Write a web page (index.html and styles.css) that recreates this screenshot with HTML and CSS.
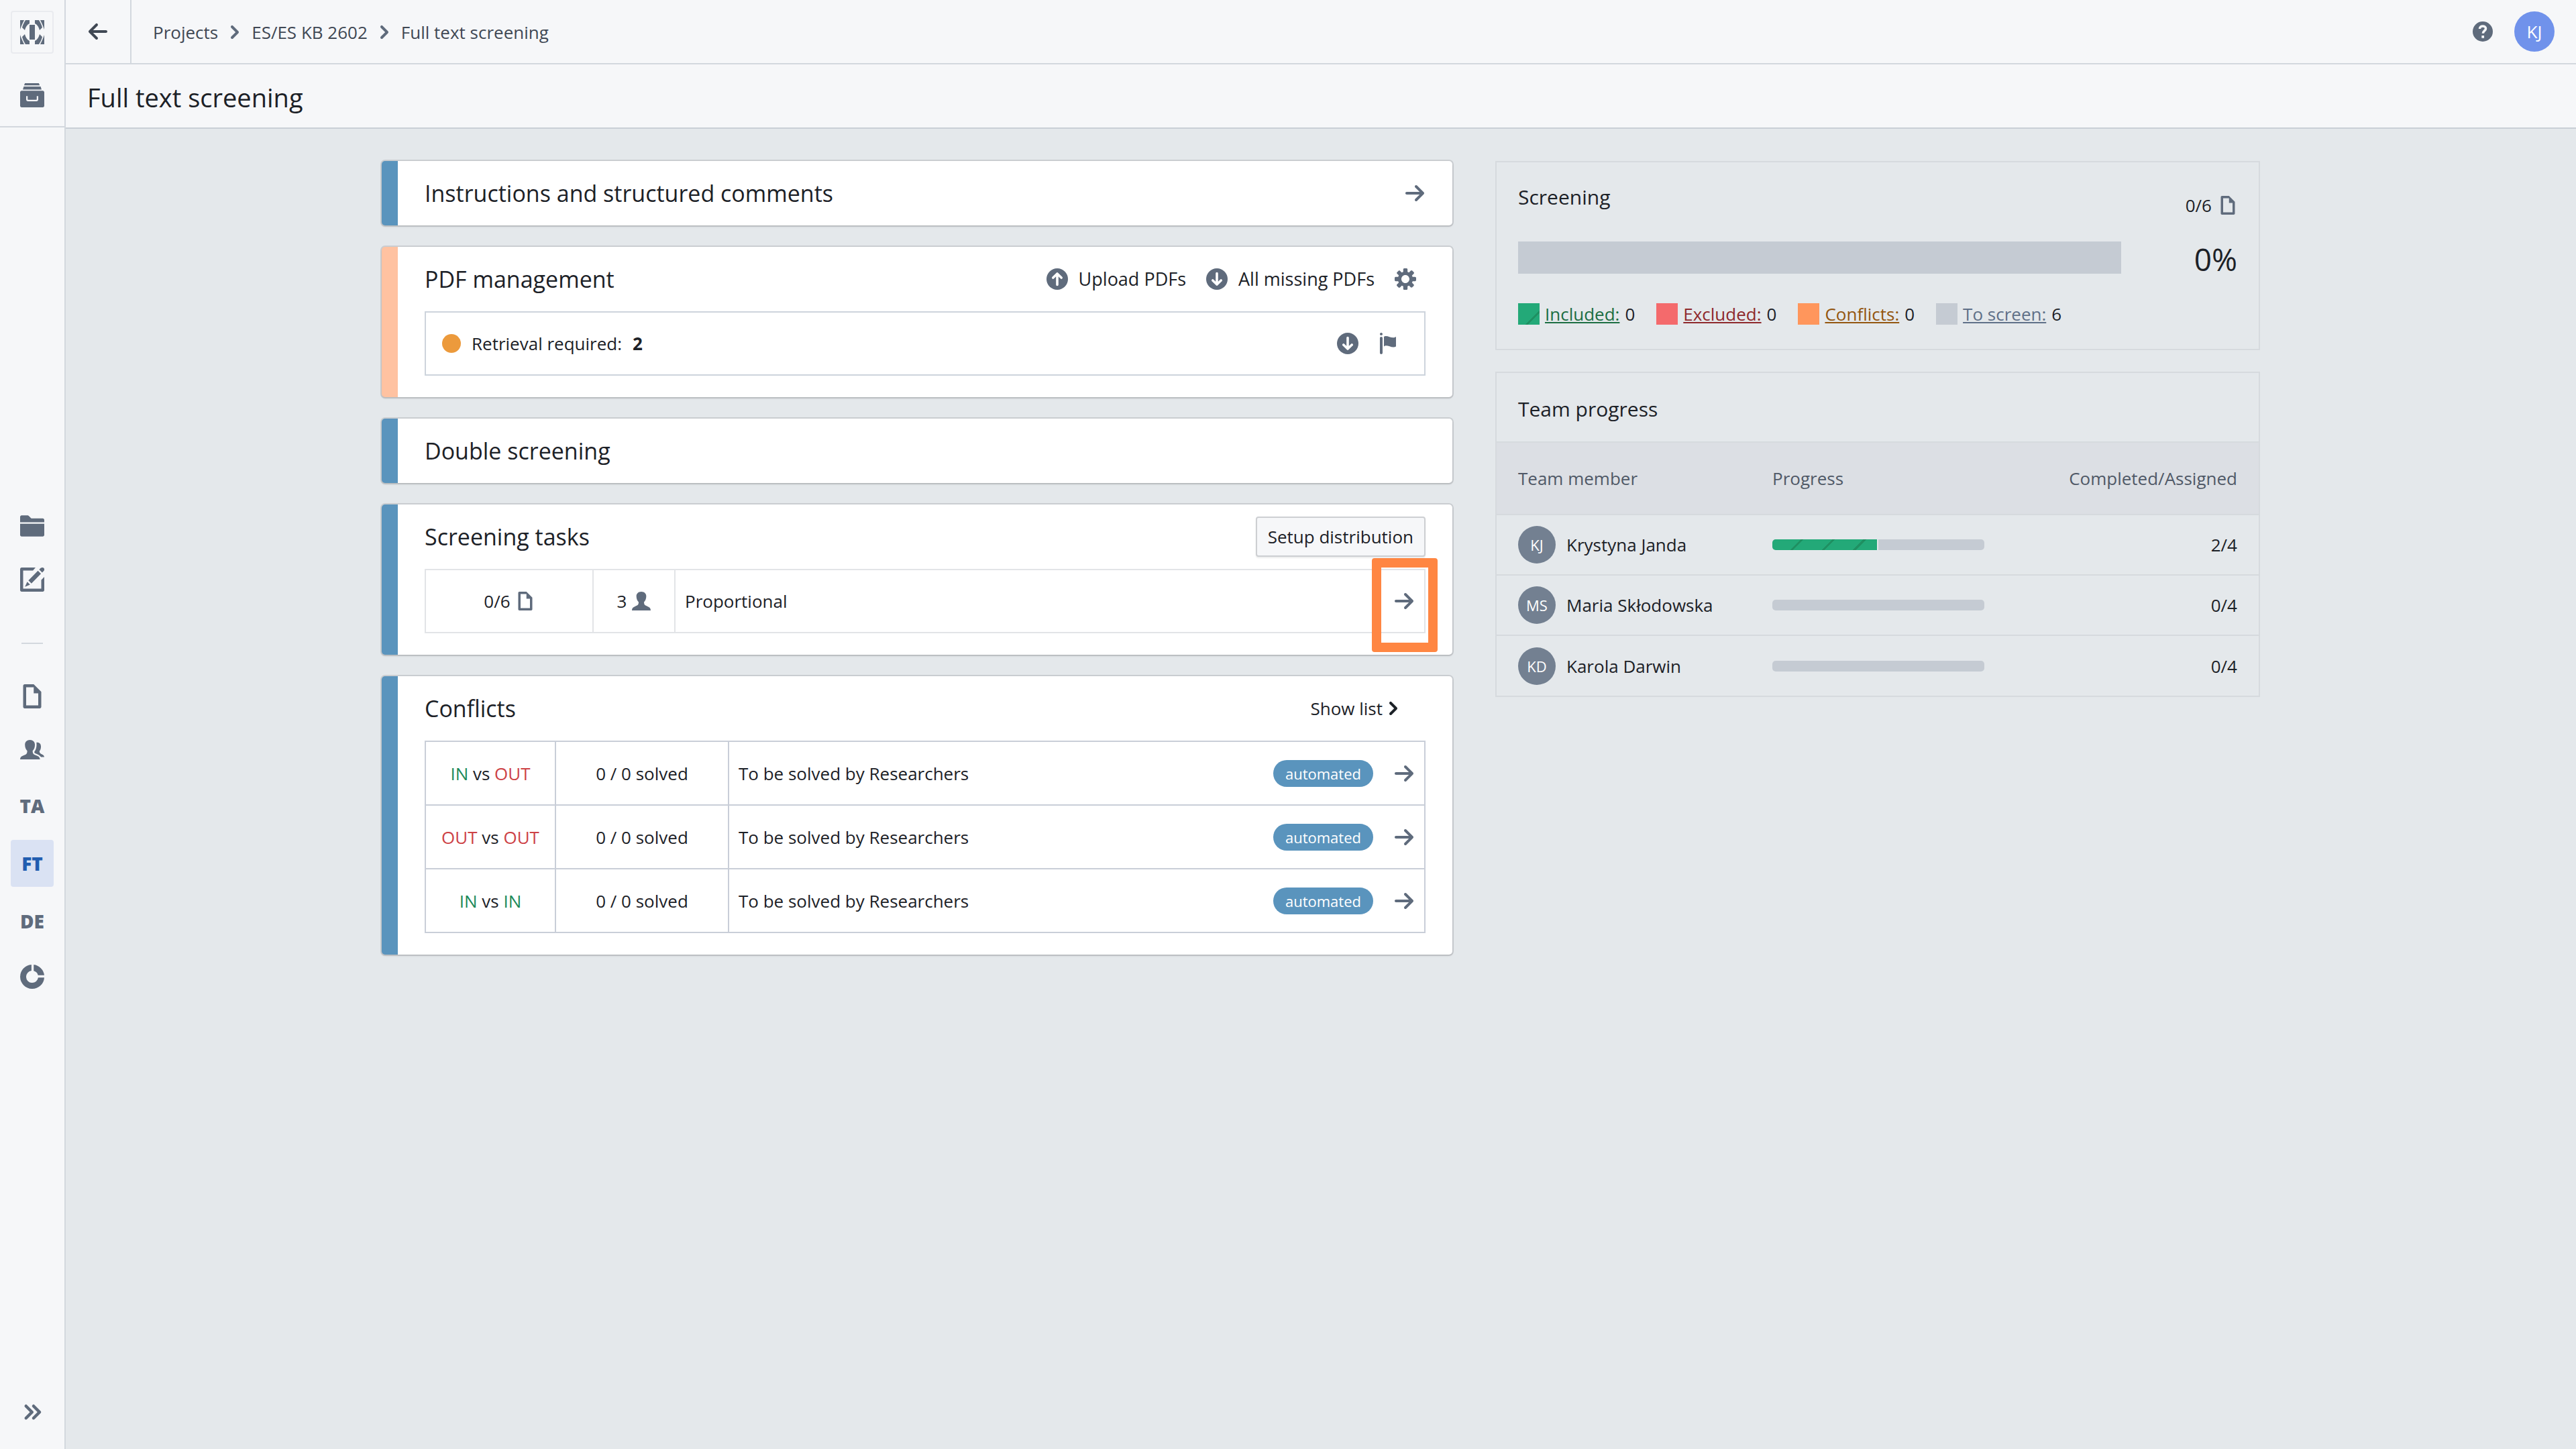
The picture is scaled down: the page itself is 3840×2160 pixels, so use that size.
FILE: index.html
```html
<!DOCTYPE html>
<html lang="en">
<head>
<meta charset="utf-8">
<title>Full text screening</title>
<link rel="stylesheet" href="styles.css">
</head>
<body>
<svg class="sprite" aria-hidden="true">
  <symbol id="logo" viewBox="0 0 36 36"><path d="M14 7h8v22h-8zM0 0h6C4 4 2 8 0 14zM8 0h6v5C10 7 8 11 7 15L3 11C4 7 6 3 8 0zM36 0h-6c2 4 4 8 6 14zM28 0h-6v5c4 2 6 6 7 10l4-4c-1-4-3-8-5-11zM0 36h6c-2-4-4-8-6-14zM8 36h6v-5c-4-2-6-6-7-10l-4 4c1 4 3 8 5 11zM36 36h-6c2-4 4-8 6-14zM28 36h-6v-5c4-2 6-6 7-10l4 4c-1 4-3 8-5 11z"/></symbol>
  <symbol id="archive" viewBox="0 0 16 16"><path d="M3.2 0h9.2l.6 1.4H2.600zM2.400 2.200h11.200l.6 2H1.800zM1 5h14c.55 0 1 .45 1 1v9c0 .55-.45 1-1 1H1c-.55 0-1-.45-1-1V6c0-.55.45-1 1-1zm3 3.500v2.300c0 .7.500 1.200 1.200 1.200h5.600c.7 0 1.200-.5 1.200-1.200V8.500h-1v2.200c0 .2-.1.300-.3.300H5.300c-.2 0-.3-.1-.3-.3V8.500z"/></symbol>
  <symbol id="folder" viewBox="0 0 16 16"><path d="M0 14c0 .55.45 1 1 1h14c.55 0 1-.45 1-1V6.500H0zm15-11H7.400L5.700 1.300A1 1 0 0 0 5 1H1c-.55 0-1 .45-1 1v3.500h16V4c0-.55-.45-1-1-1z"/></symbol>
  <symbol id="edit" viewBox="0 0 16 16"><path d="M10.200 0L8.500 2H2v12h12V8.200l2-2V15c0 .55-.45 1-1 1H1c-.55 0-1-.45-1-1V1c0-.55.45-1 1-1zM14.700 0a1.300 1.300 0 0 1 .9 2.300l-1 1-2-2 1-1c.300-.2.700-.3 1.100-.3zM11.800 2.100l2 2-6.300 6.400-2-2zM4.700 9.400l1.900 1.900L3.200 12.800z"/></symbol>
  <symbol id="document" viewBox="0 0 16 16"><path d="M9 0H3c-.55 0-1 .45-1 1v14c0 .55.45 1 1 1h10c.55 0 1-.45 1-1V5L9 0zm3 14H4V2h5v4h3v8z"/></symbol>
  <symbol id="people" viewBox="0 0 16 16"><path d="M6.500 1.300c2 0 3.300 1.300 3.300 3.200 0 1.600-.6 3.200-1.500 4 0 2 .6 2.400 2.300 3 1.500.5 2.400 1.100 2.600 2.700H0c.1-1.600 1-2.200 2.400-2.700 1.700-.6 2.300-1 2.300-3-.9-.8-1.500-2.400-1.500-4 0-1.900 1.300-3.200 3.300-3.200zM10.800 3c2-.2 3 .9 3 2.800 0 1.300-.4 2.300-1 3 0 1.300.7 1.600 1.700 2.100.9.400 1.400.9 1.500 1.800h-2.200c-.7-1.200-1.700-1.600-3.800-2.500-.4-.2-.6-.4-.6-1 1-1 1.500-3 1.500-4.600 0-.6 0-1.100-.1-1.600z"/></symbol>
  <symbol id="person" viewBox="0 0 16 16"><path d="M8 0c2.500 0 4.200 1.600 4.200 3.900 0 1.900-.7 3.900-1.900 5 0 2.300.8 2.800 3 3.600 1.600.6 2.600 1.400 2.700 3.500H0c.1-2.100 1.100-2.900 2.700-3.500 2.200-.8 3-1.300 3-3.600-1.200-1.100-1.900-3.100-1.900-5C3.800 1.600 5.500 0 8 0z"/></symbol>
  <symbol id="donut" viewBox="0 0 16 16"><path d="M7.500 0v4.050A4 4 0 1 0 11.950 8.500H16A8 8 0 1 1 7.500 0zM9 0a8 8 0 0 1 7 7h-4.150A4 4 0 0 0 9 4.150z"/></symbol>
  <symbol id="double-chevron" viewBox="0 0 16 16"><path d="M7.710 7.290l-4-4a1.003 1.003 0 0 0-1.420 1.420L5.590 8 2.300 11.290c-.19.180-.3.430-.3.710a1.003 1.003 0 0 0 1.710.710l4-4C7.890 8.530 8 8.280 8 8c0-.28-.11-.53-.29-.71zm5 0l-4-4a1.003 1.003 0 0 0-1.420 1.420L10.590 8 7.300 11.290c-.19.180-.3.430-.3.710a1.003 1.003 0 0 0 1.710.710l4-4c.18-.18.290-.43.290-.71 0-.28-.11-.53-.29-.71z"/></symbol>
  <symbol id="chevron" viewBox="0 0 16 16"><path d="M10.710 7.290l-4-4a1.003 1.003 0 0 0-1.420 1.420L8.590 8 5.300 11.290c-.19.180-.3.430-.3.710a1.003 1.003 0 0 0 1.710.710l4-4c.18-.18.290-.43.290-.71 0-.28-.11-.53-.29-.71z"/></symbol>
  <symbol id="arrow-left" viewBox="0 0 16 16"><path d="M13.990 6.990H4.410L7.700 3.700a1.003 1.003 0 0 0-1.420-1.420l-5 5a1.014 1.014 0 0 0 0 1.420l5 5a1.003 1.003 0 0 0 1.420-1.420L4.410 8.990H14c.55 0 1-.45 1-1s-.46-1-1.010-1z"/></symbol>
  <symbol id="arrow-right" viewBox="0 0 16 16"><path d="M14.700 7.290l-5-5a.965.965 0 0 0-.71-.3 1.003 1.003 0 0 0-.71 1.710l3.300 3.290H1.990c-.55 0-1 .45-1 1s.45 1 1 1h9.590l-3.290 3.290a1.003 1.003 0 0 0 1.420 1.420l5-5c.18-.18.290-.43.290-.71s-.12-.52-.3-.7z"/></symbol>
  <symbol id="circle-up" viewBox="0 0 16 16"><circle cx="8" cy="8" r="8"/><path d="M8 12.200V4.300M4.900 7L8 4l3.100 3" fill="none" stroke="#fff" stroke-width="1.800" stroke-linecap="round" stroke-linejoin="round"/></symbol>
  <symbol id="circle-down" viewBox="0 0 16 16"><circle cx="8" cy="8" r="8"/><path d="M8 3.800v7.900M4.900 9L8 12l3.100-3" fill="none" stroke="#fff" stroke-width="1.800" stroke-linecap="round" stroke-linejoin="round"/></symbol>
  <symbol id="flag" viewBox="0 0 16 16"><path d="M2.990 2.990c-.55 0-1 .45-1 1v11c0 .55.450 1 1 1s1-.45 1-1v-11c0-.55-.45-1-1-1zm0-3c-.55 0-1 .45-1 1s.45 1 1 1 1-.45 1-1-.45-1-1-1zm2 3.030v7.230c2.070-2.110 5.920 1.750 9 0V3.020c-3 2.070-6.940-2.030-9 0z"/></symbol>
  <symbol id="cog" viewBox="0 0 16 16"><path d="M15.190 6.390h-1.850c-.11-.37-.27-.71-.45-1.040l1.360-1.360c.31-.31.310-.82 0-1.130l-1.130-1.130a.803.803 0 0 0-1.130 0l-1.360 1.360c-.33-.17-.67-.33-1.040-.44V.79c0-.44-.36-.8-.8-.8h-1.600c-.44 0-.8.36-.8.8v1.860c-.39.120-.75.280-1.100.470l-1.300-1.300c-.3-.3-.79-.3-1.090 0L1.820 2.910c-.3.300-.3.790 0 1.090l1.300 1.300c-.2.340-.36.700-.48 1.090H.79c-.44 0-.8.360-.8.800v1.600c0 .44.360.8.800.8h1.850c.11.370.27.710.45 1.040l-1.360 1.360c-.31.310-.31.820 0 1.130l1.130 1.130c.31.310.82.310 1.130 0l1.360-1.360c.33.180.67.330 1.040.44v1.860c0 .44.360.8.800.8h1.600c.44 0 .8-.36.800-.8v-1.860c.39-.12.750-.28 1.100-.47l1.300 1.300c.3.300.79.300 1.090 0l1.090-1.090c.3-.3.300-.79 0-1.090l-1.300-1.300c.19-.35.360-.71.480-1.100h1.850c.44 0 .8-.36.800-.8v-1.600a.816.816 0 0 0-.81-.79zm-7.200 4.600c-1.660 0-3-1.340-3-3s1.340-3 3-3 3 1.340 3 3-1.340 3-3 3z"/></symbol>
  <symbol id="help" viewBox="0 0 16 16"><circle cx="8" cy="8" r="8"/><path d="M5.600 5.800C5.600 3 10.400 3 10.400 5.700c0 1.700-2.200 1.800-2.200 3.800" fill="none" stroke="#f6f7f9" stroke-width="1.900"/><path d="M7.100 11.200h2v2h-2z" fill="#f6f7f9"/></symbol>
</svg>

<div class="app">
  <aside class="sidebar">
    <div class="sidebar-top">
      <a class="logo" href="#" aria-label="Home"><svg class="icon-lg"><use href="#logo"/></svg></a>
      <a class="side-link" href="#" aria-label="Projects"><svg class="icon-lg"><use href="#archive"/></svg></a>
    </div>
    <nav class="side-nav" aria-label="Project">
      <a class="side-link" href="#" aria-label="Files"><svg class="icon-lg"><use href="#folder"/></svg></a>
      <a class="side-link" href="#" aria-label="Edit"><svg class="icon-lg"><use href="#edit"/></svg></a>
      <hr class="side-divider">
      <a class="side-link" href="#" aria-label="Documents"><svg class="icon-lg"><use href="#document"/></svg></a>
      <a class="side-link" href="#" aria-label="Team"><svg class="icon-lg"><use href="#people"/></svg></a>
      <a class="side-link side-text" href="#">TA</a>
      <a class="side-link side-text side-active" href="#" aria-current="page">FT</a>
      <a class="side-link side-text" href="#">DE</a>
      <a class="side-link" href="#" aria-label="Statistics"><svg class="icon-lg"><use href="#donut"/></svg></a>
    </nav>
    <div class="sidebar-bottom">
      <button class="side-link" type="button" aria-label="Expand"><svg class="icon-lg"><use href="#double-chevron"/></svg></button>
    </div>
  </aside>

  <div class="page">
    <header class="topbar">
      <a class="back" href="#" aria-label="Back"><svg class="icon"><use href="#arrow-left"/></svg></a>
      <nav class="crumbs" aria-label="Breadcrumb">
        <a href="#">Projects</a>
        <svg class="icon"><use href="#chevron"/></svg>
        <a href="#">ES/ES KB 2602</a>
        <svg class="icon"><use href="#chevron"/></svg>
        <a href="#">Full text screening</a>
      </nav>
      <div class="topbar-end">
        <button class="plain" type="button" aria-label="Help"><svg class="icon-help"><use href="#help"/></svg></button>
        <button class="plain user" type="button">KJ</button>
      </div>
    </header>
    <div class="titlebar"><h1>Full text screening</h1></div>

    <main class="content">
      <div class="cards">
        <section class="card">
          <div class="card-head">
            <h2>Instructions and structured comments</h2>
            <a href="#" aria-label="Open instructions"><svg class="icon"><use href="#arrow-right"/></svg></a>
          </div>
        </section>

        <section class="card card-warning card-full">
          <div class="card-head">
            <h2>PDF management</h2>
            <div class="actions actions-pdf">
              <button class="plain" type="button"><svg class="icon"><use href="#circle-up"/></svg>Upload PDFs</button>
              <button class="plain" type="button"><svg class="icon"><use href="#circle-down"/></svg>All missing PDFs</button>
              <button class="plain" type="button" aria-label="Settings"><svg class="icon"><use href="#cog"/></svg></button>
            </div>
          </div>
          <div class="status-row">
            <span class="dot"></span>
            <span>Retrieval required:</span>
            <strong>2</strong>
            <div class="status-actions">
              <button class="plain" type="button" aria-label="Download"><svg class="icon"><use href="#circle-down"/></svg></button>
              <button class="plain" type="button" aria-label="Flag"><svg class="icon"><use href="#flag"/></svg></button>
            </div>
          </div>
        </section>

        <section class="card">
          <div class="card-head"><h2>Double screening</h2></div>
        </section>

        <section class="card card-full">
          <div class="card-head">
            <h2>Screening tasks</h2>
            <button class="btn" type="button">Setup distribution</button>
          </div>
          <table class="grid grid-light tasks">
            <tbody>
              <tr>
                <td class="col-count"><span class="pair">0/6<svg class="icon-sm"><use href="#document"/></svg></span></td>
                <td class="col-people"><span class="pair">3<svg class="icon-sm"><use href="#person"/></svg></span></td>
                <td>
                  <div class="row-line">
                    <span>Proportional</span>
                    <a class="row-open spot" href="#" aria-label="Open task"><svg class="icon"><use href="#arrow-right"/></svg></a>
                  </div>
                </td>
              </tr>
            </tbody>
          </table>
        </section>

        <section class="card card-full">
          <div class="card-head">
            <h2>Conflicts</h2>
            <button class="plain show-list" type="button">Show list<svg class="icon"><use href="#chevron"/></svg></button>
          </div>
          <table class="grid conflicts">
            <tbody>
              <tr>
                <td class="col-pair"><span class="in">IN</span> vs <span class="out">OUT</span></td>
                <td class="col-solved">0 / 0 solved</td>
                <td><div class="row-line"><span>To be solved by Researchers</span><span class="badge">automated</span><a class="row-open" href="#" aria-label="Open IN vs OUT"><svg class="icon"><use href="#arrow-right"/></svg></a></div></td>
              </tr>
              <tr>
                <td class="col-pair"><span class="out">OUT</span> vs <span class="out">OUT</span></td>
                <td class="col-solved">0 / 0 solved</td>
                <td><div class="row-line"><span>To be solved by Researchers</span><span class="badge">automated</span><a class="row-open" href="#" aria-label="Open OUT vs OUT"><svg class="icon"><use href="#arrow-right"/></svg></a></div></td>
              </tr>
              <tr>
                <td class="col-pair"><span class="in">IN</span> vs <span class="in">IN</span></td>
                <td class="col-solved">0 / 0 solved</td>
                <td><div class="row-line"><span>To be solved by Researchers</span><span class="badge">automated</span><a class="row-open" href="#" aria-label="Open IN vs IN"><svg class="icon"><use href="#arrow-right"/></svg></a></div></td>
              </tr>
            </tbody>
          </table>
        </section>
      </div>

      <div class="panels">
        <section class="panel summary">
          <div class="summary-main">
            <h3>Screening</h3>
            <div class="bar"></div>
          </div>
          <div class="summary-side">
            <span class="pair">0/6<svg class="icon-sm"><use href="#document"/></svg></span>
            <span class="percent">0%</span>
          </div>
          <ul class="legend">
            <li><span class="swatch swatch-in"></span><a class="link-in" href="#">Included:</a> 0</li>
            <li><span class="swatch swatch-out"></span><a class="link-out" href="#">Excluded:</a> 0</li>
            <li><span class="swatch swatch-conflict"></span><a class="link-conflict" href="#">Conflicts:</a> 0</li>
            <li><span class="swatch"></span><a class="link-todo" href="#">To screen:</a> 6</li>
          </ul>
        </section>

        <section class="panel">
          <h3 class="panel-title">Team progress</h3>
          <table class="team">
            <thead>
              <tr><th class="col-member">Team member</th><th>Progress</th><th class="num">Completed/Assigned</th></tr>
            </thead>
            <tbody>
              <tr>
                <td><span class="member"><span class="avatar">KJ</span>Krystyna Janda</span></td>
                <td><div class="meter"><span class="meter-done" style="width: 50%"></span></div></td>
                <td class="num">2/4</td>
              </tr>
              <tr>
                <td><span class="member"><span class="avatar">MS</span>Maria Skłodowska</span></td>
                <td><div class="meter"></div></td>
                <td class="num">0/4</td>
              </tr>
              <tr>
                <td><span class="member"><span class="avatar">KD</span>Karola Darwin</span></td>
                <td><div class="meter"></div></td>
                <td class="num">0/4</td>
              </tr>
            </tbody>
          </table>
        </section>
      </div>
    </main>
  </div>
</div>
</body>
</html>
```
FILE: styles.css
```css
* { box-sizing: border-box; }

body {
  margin: 0;
  background: #e4e8eb;
  color: #1c2127;
  font-family: "Open Sans", "Noto Sans", sans-serif;
  font-size: 26px;
  line-height: 36px;
}

h1, h2, h3, ul { margin: 0; padding: 0; font-weight: 400; }
a { color: inherit; text-decoration: none; }
button { font: inherit; color: inherit; }
table { border-collapse: collapse; width: 100%; }

.sprite { position: absolute; width: 0; height: 0; }
.icon, .icon-lg, .icon-sm, .icon-help { display: block; flex: none; fill: #5f6b7c; }
.icon { width: 32px; height: 32px; }
.icon-lg { width: 36px; height: 36px; }
.icon-sm { width: 28px; height: 28px; }
.icon-help { width: 30px; height: 30px; }

.plain {
  display: flex;
  align-items: center;
  gap: 16px;
  padding: 0;
  border: 0;
  background: none;
}

.app { display: flex; min-height: 100vh; }

/* Sidebar */
.sidebar {
  display: flex;
  flex-direction: column;
  flex: none;
  width: 98px;
  background: #f6f7f9;
  border-right: 2px solid #d3d8de;
}
.sidebar-top {
  display: flex;
  flex-direction: column;
  align-items: center;
  gap: 30px;
  height: 190px;
  padding-top: 16px;
  border-bottom: 2px solid #d3d8de;
}
.logo, .side-link {
  display: flex;
  align-items: center;
  justify-content: center;
  width: 64px;
  height: 64px;
  padding: 0;
  border: 0;
  border-radius: 4px;
  background: none;
}
.logo { border: 2px solid #e9ebef; }
.side-nav {
  display: flex;
  flex: 1;
  flex-direction: column;
  align-items: center;
  justify-content: center;
  gap: 16px;
}
.side-divider {
  width: 32px;
  margin: 46px 0 30px;
  border: 0;
  border-top: 2px solid #d3d8de;
}
.side-text {
  height: 70px;
  color: #5f6b7c;
  font-size: 28px;
  font-weight: 800;
}
.side-active { background: #dae2f3; color: #215db0; }
.sidebar-bottom { display: flex; justify-content: center; height: 110px; padding: 23px 0 0 4px; }

/* Top bars */
.page { flex: 1; min-width: 0; }
.topbar {
  display: flex;
  align-items: center;
  height: 96px;
  background: #f6f7f9;
  border-bottom: 2px solid #d3d8de;
}
.back {
  display: flex;
  align-items: center;
  justify-content: center;
  align-self: stretch;
  width: 98px;
  border-right: 2px solid #d3d8de;
}
.back .icon { fill: #404854; }
.crumbs { display: flex; align-items: center; gap: 9px; padding: 2px 0 0 32px; color: #404854; }
.topbar-end { display: flex; align-items: center; gap: 32px; margin-left: auto; padding-right: 32px; }
.user {
  justify-content: center;
  width: 60px;
  height: 60px;
  border-radius: 50%;
  background: #7092eb;
  color: #fff;
}
.titlebar {
  display: flex;
  align-items: center;
  height: 96px;
  padding: 4px 0 0 32px;
  background: #f6f7f9;
  border-bottom: 2px solid #c9cfd6;
}
h1 { font-size: 38px; line-height: 48px; }

/* Content */
.content {
  display: grid;
  grid-template-columns: 1596fr 1140fr;
  gap: 64px;
  align-items: start;
  max-width: 2800px;
  margin: 0 auto;
  padding: 48px 0;
}
.cards, .panels { display: flex; flex-direction: column; gap: 32px; }

.card {
  padding: 0 40px;
  border-left: 24px solid #5a94bd;
  border-radius: 5px;
  background: #fff;
  box-shadow: 0 0 0 2px rgba(17, 20, 24, .12), 0 2px 3px rgba(17, 20, 24, .1);
}
.card-warning { border-left-color: #ffc2a1; }
.card-full { padding-bottom: 32px; }
.card-head { display: flex; align-items: center; justify-content: space-between; height: 96px; }
h2 { font-size: 34px; line-height: 44px; }

.actions { display: flex; gap: 30px; }
.actions-pdf { padding-right: 14px; font-size: 27px; }
.show-list { gap: 0; padding-right: 32px; }
.show-list .icon { fill: #1c2127; }

.status-row {
  display: flex;
  align-items: center;
  gap: 16px;
  height: 96px;
  padding: 0 38px 0 24px;
  border: 2px solid #cdd4dc;
}
.dot { width: 28px; height: 28px; border-radius: 50%; background: #ec9a3c; }
.status-actions { display: flex; gap: 28px; margin-left: auto; }

.btn {
  height: 60px;
  padding: 0 16px;
  border: 2px solid #cdcfd2;
  border-radius: 4px;
  background: #f6f7f9;
  box-shadow: 0 2px 2px rgba(17, 20, 24, .08);
}

.pair { display: inline-flex; align-items: center; gap: 10px; }
.grid td { height: 95px; padding: 0 14px; border: 2px solid #c9ced8; }
.grid-light td { height: 94px; border-color: #e2e4e7; }
.tasks .col-count { width: 250px; text-align: center; }
.tasks .col-people { width: 122px; text-align: center; }
.tasks .pair { gap: 8px; }
.conflicts .col-pair { width: 194px; padding: 0; text-align: center; }
.conflicts .col-solved { width: 258px; text-align: center; }
.row-line { display: flex; align-items: center; gap: 30px; }
.row-open { position: relative; margin-left: auto; }
.badge {
  height: 40px;
  margin-left: auto;
  padding: 0 18px;
  border-radius: 20px;
  background: #5a94bd;
  color: #fff;
  font-size: 22px;
  line-height: 40px;
}
.badge + .row-open { margin-left: 0; }
.in { color: #1c8a5a; }
.out { color: #cd4246; }

/* Highlight frame laid over the task's open arrow */
.spot::after {
  content: "";
  position: absolute;
  inset: -48px -34px -60px -32px;
  border: 14px solid #ff8642;
  border-radius: 4px;
}

/* Right column */
.panel { border: 2px solid #d6dade; }
h3 { font-size: 30px; line-height: 40px; }
.summary {
  display: grid;
  grid-template-columns: 1fr auto;
  column-gap: 96px;
  padding: 32px 32px 34px;
}
.summary-main { display: flex; flex-direction: column; gap: 46px; }
.bar { height: 48px; background: #c5cbd3; }
.summary-side { display: flex; flex-direction: column; align-items: flex-end; gap: 32px; padding-top: 14px; }
.percent { font-size: 46px; line-height: 60px; }
.legend {
  display: flex;
  grid-column: 1 / -1;
  gap: 32px;
  margin-top: 34px;
  list-style: none;
}
.legend li { display: flex; align-items: center; gap: 8px; }
.legend a { text-decoration: underline; text-underline-offset: 2px; text-decoration-thickness: 2px; }
.swatch { width: 32px; height: 32px; background: #c5cbd3; }
.swatch-in, .meter-done {
  background: repeating-linear-gradient(135deg, #23a978 0 30px, #1f9062 30px 33px);
}
.swatch-out { background: #f46a6c; }
.swatch-conflict { background: #ff965c; }
.link-in { color: #1c6e42; }
.link-out { color: #8e292c; }
.link-conflict { color: #935610; }
.link-todo { color: #5f7088; }

.panel-title { padding: 34px 32px 28px; }
.team th {
  height: 108px;
  padding: 0;
  background: #dcdfe4;
  color: #505967;
  font-weight: 400;
  text-align: left;
}
.team tr { border-top: 2px solid #d6dade; }
.team td { height: 90px; padding: 0; }
.team th:first-child, .team td:first-child { padding-left: 32px; }
.team th:last-child, .team td:last-child { padding-right: 32px; }
.team .num { text-align: right; }
.team .col-member { width: 411px; }
.member { display: flex; align-items: center; gap: 16px; }
.avatar {
  width: 56px;
  height: 56px;
  border-radius: 50%;
  background: #738091;
  color: #fff;
  font-size: 22px;
  line-height: 56px;
  text-align: center;
}
.meter { display: flex; width: 316px; height: 16px; border-radius: 5px; background: #c5cbd3; overflow: hidden; }
.meter-done { border-right: 2px solid #e4e8eb; }
```
